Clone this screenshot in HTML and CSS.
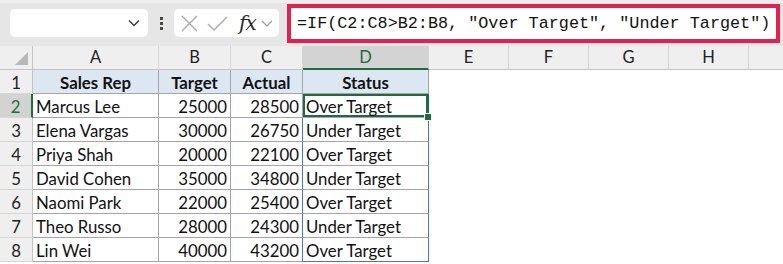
FILE: index.html
```html
<!DOCTYPE html>
<html lang="en">
<head>
    <meta charset="UTF-8">
    <title>Spill Formula</title>
    <link rel="stylesheet" href="styles.css">
</head>
<body>
    <!-- Formula bar -->
    <div class="bar">
        <div class="name-box">
            <svg class="chev" width="12" height="8" viewBox="0 0 12 8"><path d="M1 1.5 L6 6.5 L11 1.5" fill="none" stroke="#3a3a3a" stroke-width="1.5"/></svg>
        </div>
        <div class="grip"><i></i><i></i><i></i></div>
        <div class="fx-box">
            <svg width="17" height="17" viewBox="0 0 17 17"><path d="M1 1 L16 16 M16 1 L1 16" stroke="#a8a8a8" stroke-width="1.3" fill="none"/></svg>
            <svg width="21" height="15" viewBox="0 0 21 15"><path d="M1 8 L7 14 L20 1" stroke="#a8a8a8" stroke-width="1.3" fill="none"/></svg>
            <span class="fx">fx</span>
            <svg width="12" height="7" viewBox="0 0 12 7"><path d="M1 1 L6 6 L11 1" fill="none" stroke="#9a9a9a" stroke-width="1.2"/></svg>
        </div>
        <div class="formula">=IF(C2:C8&gt;B2:B8, "Over Target", "Under Target")</div>
    </div>

    <!-- Sheet -->
    <div class="sheet">
        <div class="hd corner"><span class="tri"></span></div>
        <div class="hd">A</div>
        <div class="hd">B</div>
        <div class="hd">C</div>
        <div class="hd sel-col">D</div>
        <div class="hd">E</div>
        <div class="hd">F</div>
        <div class="hd">G</div>
        <div class="hd">H</div>
        <div class="hd last"></div>

        <div class="rn">1</div>
        <div class="c th">Sales Rep</div>
        <div class="c th">Target</div>
        <div class="c th">Actual</div>
        <div class="c th">Status</div>
        <div class="e"></div><div class="e"></div><div class="e"></div><div class="e"></div><div class="e"></div>

        <div class="rn sel-row">2</div>
        <div class="c">Marcus Lee</div>
        <div class="c num">25000</div>
        <div class="c num">28500</div>
        <div class="c st active">Over Target<span class="handle"></span></div>
        <div class="e"></div><div class="e"></div><div class="e"></div><div class="e"></div><div class="e"></div>

        <div class="rn">3</div>
        <div class="c">Elena Vargas</div>
        <div class="c num">30000</div>
        <div class="c num spill-l">26750</div>
        <div class="c st">Under Target</div>
        <div class="e"></div><div class="e"></div><div class="e"></div><div class="e"></div><div class="e"></div>

        <div class="rn">4</div>
        <div class="c">Priya Shah</div>
        <div class="c num">20000</div>
        <div class="c num spill-l">22100</div>
        <div class="c st">Over Target</div>
        <div class="e"></div><div class="e"></div><div class="e"></div><div class="e"></div><div class="e"></div>

        <div class="rn">5</div>
        <div class="c">David Cohen</div>
        <div class="c num">35000</div>
        <div class="c num spill-l">34800</div>
        <div class="c st">Under Target</div>
        <div class="e"></div><div class="e"></div><div class="e"></div><div class="e"></div><div class="e"></div>

        <div class="rn">6</div>
        <div class="c">Naomi Park</div>
        <div class="c num">22000</div>
        <div class="c num spill-l">25400</div>
        <div class="c st">Over Target</div>
        <div class="e"></div><div class="e"></div><div class="e"></div><div class="e"></div><div class="e"></div>

        <div class="rn">7</div>
        <div class="c">Theo Russo</div>
        <div class="c num">28000</div>
        <div class="c num spill-l">24300</div>
        <div class="c st">Under Target</div>
        <div class="e"></div><div class="e"></div><div class="e"></div><div class="e"></div><div class="e"></div>

        <div class="rn">8</div>
        <div class="c">Lin Wei</div>
        <div class="c num">40000</div>
        <div class="c num spill-l">43200</div>
        <div class="c st bottom">Over Target</div>
        <div class="e"></div><div class="e"></div><div class="e"></div><div class="e"></div><div class="e"></div>
    </div>
</body>
</html>
```

FILE: styles.css
```css
body {
    margin: 0;
    background: #ffffff;
    font-family: Lato, 'Liberation Sans', sans-serif;
    color: #111;
    overflow: hidden;
}

/* formula bar */
.bar {
    height: 46px;
    box-sizing: border-box;
    background: #e6e6e6;
    border-top: 3px solid #eeeeee;
    display: flex;
    align-items: center;
    padding-left: 10px;
}

.name-box {
    width: 138px;
    height: 28px;
    box-sizing: border-box;
    background: #fff;
    border-radius: 5px;
    display: flex;
    align-items: center;
    justify-content: flex-end;
    padding-right: 8px;
    margin-top: -3px;
}

.grip {
    display: flex;
    flex-direction: column;
    gap: 2px;
    margin: -3px 11px 0 12px;
}

.grip i {
    width: 3px;
    height: 3px;
    background: #4a4a3c;
}

.fx-box {
    width: 105px;
    height: 28px;
    box-sizing: border-box;
    background: #fff;
    border-radius: 5px;
    display: flex;
    align-items: center;
    padding-left: 7px;
    gap: 9px;
    margin-top: -3px;
}

.fx {
    font-family: 'DejaVu Serif', 'Liberation Serif', serif;
    font-style: italic;
    font-size: 20px;
    color: #2a2a2a;
    margin-left: 2px;
    margin-right: -4px;
    letter-spacing: -1px;
}

.formula {
    margin-left: 8px;
    margin-top: -3px;
    width: 493px;
    height: 39px;
    box-sizing: border-box;
    border: 4px solid #e2224e;
    background: #fff;
    font-family: 'Liberation Mono', monospace;
    font-size: 16.8px;
    line-height: 31px;
    padding-left: 6px;
    white-space: nowrap;
    color: #111;
}

/* grid */
.sheet {
    display: grid;
    grid-template-columns: 33px 126px 72px 72px 126px 80px 80px 80px 80px 1fr;
    grid-template-rows: 24px repeat(8, 24px);
    font-size: 16.8px;
}

.hd {
    background: #efefef;
    border-right: 1px solid #d6d6d6;
    border-bottom: 1px solid #c4c4c4;
    text-align: center;
    line-height: 23px;
    color: #222;
    font-size: 16.5px;
}

.hd.last {
    border-right: none;
}

.corner {
    position: relative;
    border-right-color: #c4c4c4;
}

.tri {
    position: absolute;
    right: 4px;
    bottom: 4px;
    width: 0;
    height: 0;
    border-left: 13px solid transparent;
    border-bottom: 13px solid #b9b9b9;
}

.sel-col {
    background: #d3d3d3;
    color: #1e6b41;
    border-bottom: 2px solid #1e6b41;
}

.rn {
    background: #efefef;
    border-right: 1px solid #c4c4c4;
    border-bottom: 1px solid #d6d6d6;
    text-align: center;
    line-height: 24px;
    padding-top: 1px;
    box-sizing: border-box;
    color: #222;
}

.sel-row {
    background: #d3d3d3;
    color: #1e6b41;
    border-right: 2px solid #1e6b41;
}

.c {
    border-right: 1px solid #a5a5a5;
    border-bottom: 1px solid #a5a5a5;
    padding: 1px 3px 0;
    line-height: 23px;
    white-space: nowrap;
    overflow: hidden;
}

.th {
    background: #dde7f2;
    font-weight: bold;
    text-align: center;
}

.num {
    text-align: right;
    padding-right: 3px;
}

.spill-l {
    border-right-color: #4a74c4;
}

.st {
    border-right-color: #4a74c4;
}

.st.bottom {
    border-bottom-color: #4a74c4;
}

.active {
    position: relative;
    overflow: visible;
    box-shadow: inset 0 0 0 2px #1e6b41;
    border-right-color: #1e6b41;
}

.handle {
    position: absolute;
    right: -4px;
    bottom: -4px;
    width: 6px;
    height: 6px;
    background: #1e6b41;
    border: 1px solid #fff;
}

.e {
    background: #fff;
}
```
